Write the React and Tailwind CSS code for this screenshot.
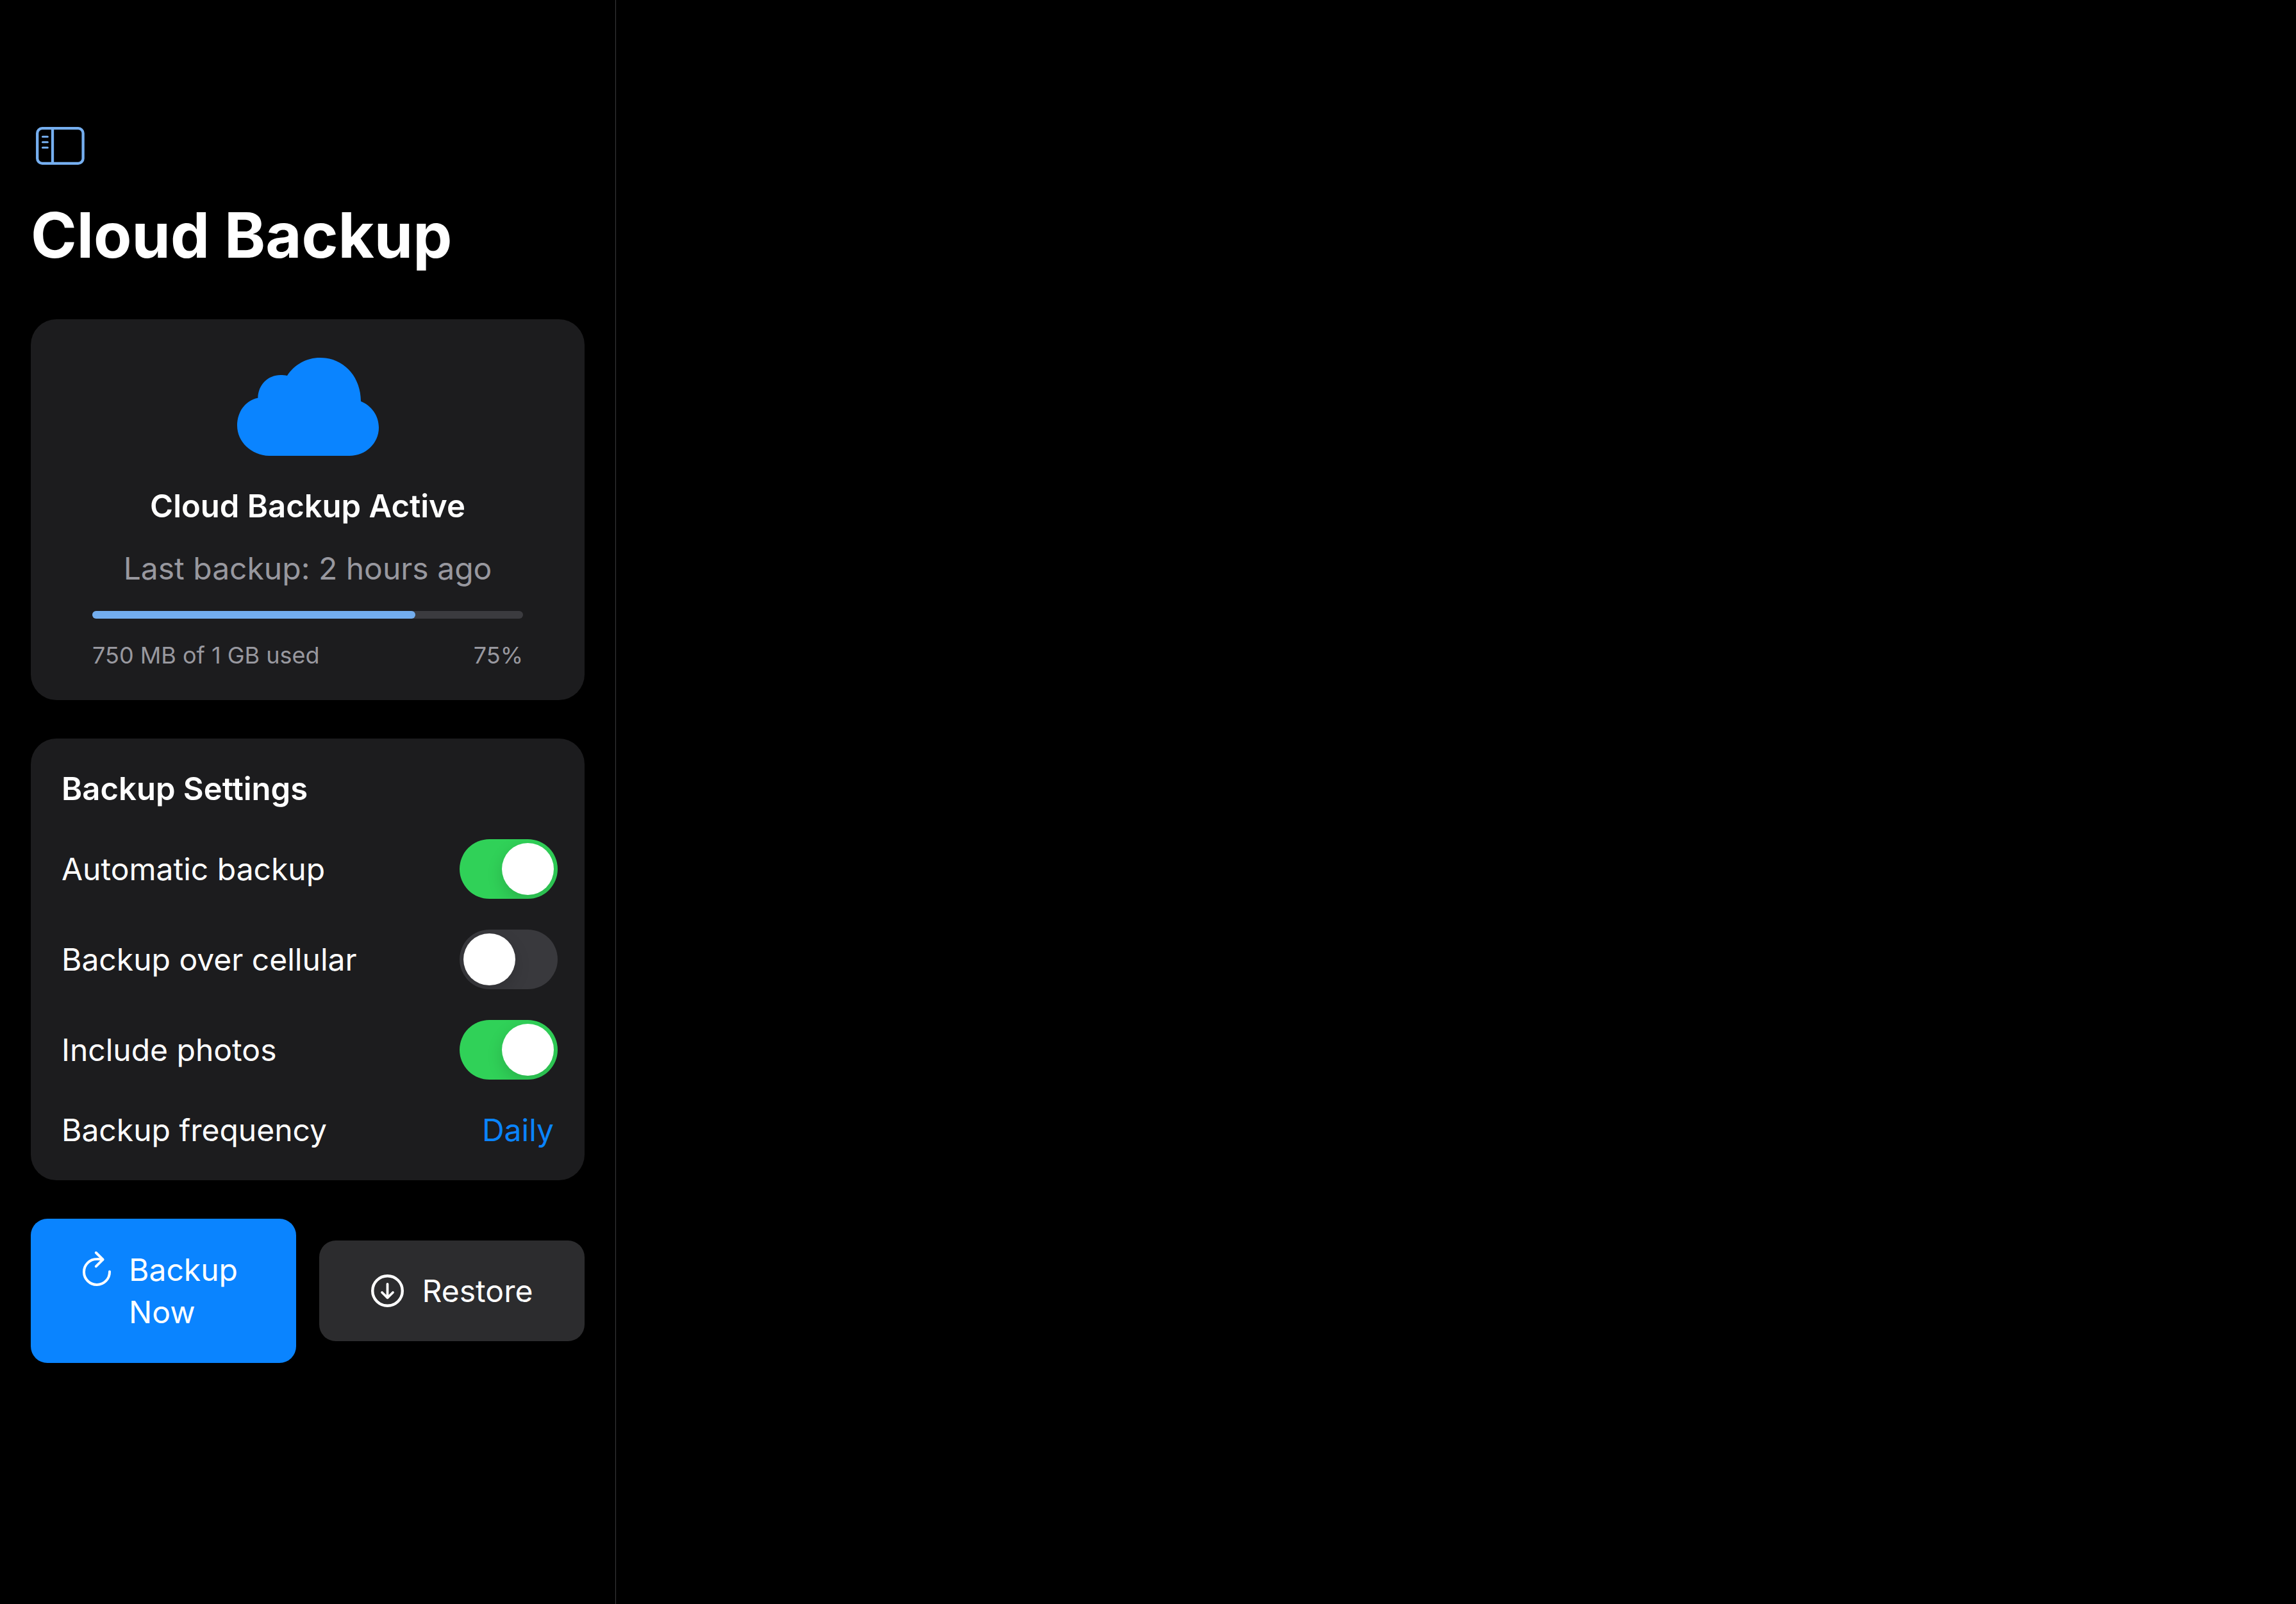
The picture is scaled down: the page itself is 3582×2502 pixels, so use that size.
import { useState } from "react";

function SidebarIcon() {
  return (
    <svg viewBox="56 198 76 59" className="h-[59px] w-[76px]" fill="none" stroke="currentColor" strokeLinecap="round" aria-hidden="true">
      <rect x="58.2" y="200.2" width="71.4" height="54.6" rx="7.5" strokeWidth="4.3" />
      <path d="M82 201v53" strokeWidth="4.3" />
      <path d="M66.5 213.2h7.8M66.5 221.7h7.8M66.5 230.2h7.8" strokeWidth="3.1" />
    </svg>
  );
}

function CloudIcon() {
  return (
    <svg viewBox="90 84 663 459" className="h-[153px] w-[221px] text-[#0a84ff]" fill="currentColor" aria-hidden="true">
      <path d="M240 543C155 541 90 476 90 402C90 335 130 283 187 272C188 210 236 165 292 165C304 165 314 166 324 168C358 116 414 84 478 84C586 84 669 170 669 288C720 309 753 356 753 411C753 483 693 543 615 543Z" />
    </svg>
  );
}

function RefreshIcon() {
  return (
    <svg viewBox="25 18 52 66" className="h-[66px] w-[52px] shrink-0" fill="none" stroke="currentColor" strokeWidth="4" strokeLinecap="round" strokeLinejoin="round" aria-hidden="true">
      <path d="M71 53.6A20 20 0 1 1 51 34C54.5 33.8 57.5 34.2 60 34.8" />
      <path d="M49.8 24L60.6 34.7L49.8 45.4" />
    </svg>
  );
}

function RestoreIcon() {
  return (
    <svg viewBox="20 21 52 66" className="h-[66px] w-[52px] shrink-0" fill="none" stroke="currentColor" strokeLinecap="round" strokeLinejoin="round" aria-hidden="true">
      <circle cx="45.5" cy="53.5" r="23.3" strokeWidth="4.4" />
      <path d="M45.5 42.8V64M37 56L45.5 64.3L54 56" strokeWidth="3.8" />
    </svg>
  );
}

function ToggleRow({ id, label, initial }) {
  const [on, setOn] = useState(initial);
  return (
    <div className="flex items-center justify-between pr-[42px]">
      <label htmlFor={id}>{label}</label>
      <input
        id={id}
        type="checkbox"
        role="switch"
        checked={on}
        onChange={(e) => setOn(e.target.checked)}
        className="flex h-[93px] w-[153px] shrink-0 cursor-pointer appearance-none items-center overflow-hidden rounded-full bg-[#39393d] p-[6px] before:size-[81px] before:rounded-full before:bg-white before:shadow-[0_9px_24px_rgba(0,0,0,0.15)] before:content-[''] checked:justify-end checked:bg-[#30d158]"
      />
    </div>
  );
}

export default function App() {
  return (
    <div className="flex min-h-screen bg-black font-['Inter',sans-serif] text-[48px] leading-[66px] text-white">
      <aside className="w-[961px] max-w-full shrink-0 border-r border-[#3a3a3c] px-[48px] pt-[198px] pb-[96px]">
        <button type="button" aria-label="Toggle sidebar" className="ml-[8px] block text-[#76aff0]">
          <SidebarIcon />
        </button>
        <h1 className="mt-[48px] text-[97px] leading-[123px] font-bold whitespace-nowrap">Cloud Backup</h1>

        <section className="mt-[70px] flex flex-col items-center rounded-[40px] bg-[#1c1c1e] px-[96px] pt-[60px] pb-[46px]">
          <CloudIcon />
          <h2 className="mt-[46px] text-[49px] leading-[66px] font-semibold">Cloud Backup Active</h2>
          <p className="mt-[31px] text-[#98989f]">Last backup: 2 hours ago</p>
          <div
            role="progressbar"
            aria-label="Storage used"
            aria-valuenow={75}
            aria-valuemin={0}
            aria-valuemax={100}
            className="mt-[33px] h-[12px] w-full rounded-full bg-[#3b3b3f]"
          >
            <div className="h-full w-3/4 rounded-full bg-[#73adee]" />
          </div>
          <div className="mt-[33px] flex w-full justify-between text-[36px] leading-[48px] text-[#98989f]">
            <span>750 MB of 1 GB used</span>
            <span>75%</span>
          </div>
        </section>

        <section className="mt-[60px] rounded-[40px] bg-[#1c1c1e] pt-[46px] pb-[45px] pl-[48px]">
          <h2 className="text-[49px] leading-[66px] font-semibold">Backup Settings</h2>
          <div className="mt-[45px] flex flex-col gap-[48px]">
            <ToggleRow id="automatic" label="Automatic backup" initial={true} />
            <ToggleRow id="cellular" label="Backup over cellular" initial={false} />
            <ToggleRow id="photos" label="Include photos" initial={true} />
          </div>
          <div className="mt-[46px] flex items-center justify-between pr-[48px]">
            <label htmlFor="frequency">Backup frequency</label>
            <select id="frequency" className="h-[66px] cursor-pointer appearance-none bg-transparent text-right text-[#0a84ff]">
              <option>Daily</option>
            </select>
          </div>
        </section>

        <div className="mt-[60px] grid grid-cols-2 items-center gap-[36px]">
          <button type="button" className="flex items-start justify-center gap-[24px] rounded-[26px] bg-[#0a84ff] pt-[47px] pr-[14px] pb-[46px] text-left">
            <RefreshIcon />
            <span className="w-min">Backup Now</span>
          </button>
          <button type="button" className="flex items-center justify-center gap-[28px] rounded-[26px] bg-[#2c2c2e] pt-[46px] pb-[45px]">
            <RestoreIcon />
            <span>Restore</span>
          </button>
        </div>
      </aside>
      <main className="min-w-0 flex-1" />
    </div>
  );
}
